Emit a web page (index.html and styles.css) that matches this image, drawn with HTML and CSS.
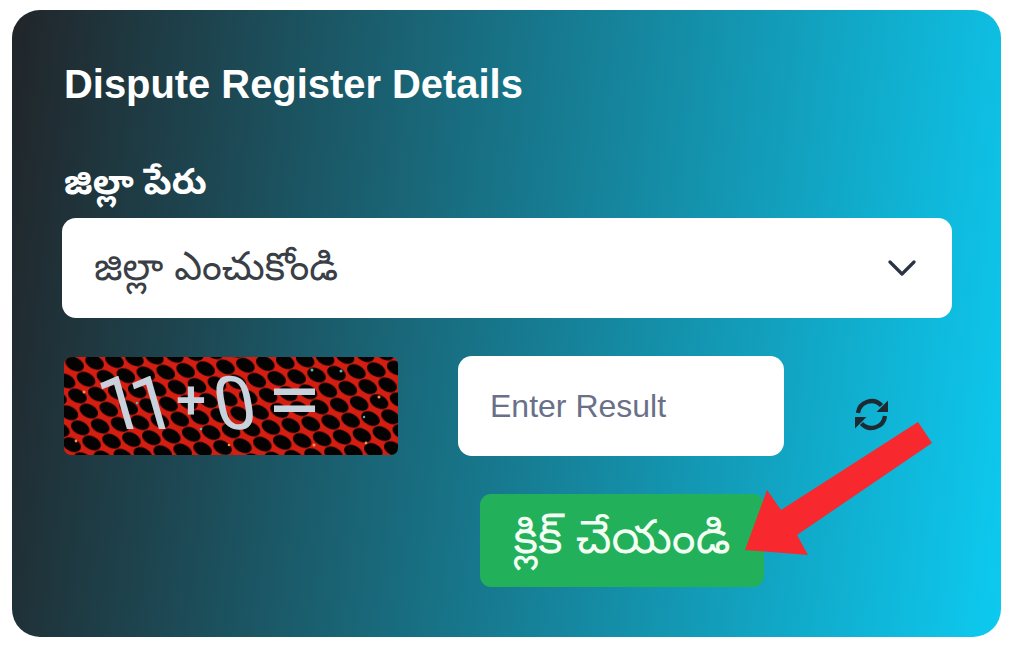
FILE: index.html
```html
<!DOCTYPE html>
<html lang="te">
<head>
<meta charset="utf-8">
<title>Dispute Register Details</title>
<link rel="stylesheet" href="styles.css">
</head>
<body>
<main class="card">
  <h1 class="title">Dispute Register Details</h1>
  <label class="label">జిల్లా పేరు</label>
  <div class="select">
    <span>జిల్లా ఎంచుకోండి</span>
    <svg class="chevron" viewBox="0 0 28 16" aria-hidden="true"><path d="M2 2 L14 14 L26 2" fill="none" stroke="#2b3445" stroke-width="3.2" stroke-linecap="round" stroke-linejoin="round"/></svg>
  </div>
  <div class="captcha-row">
    <div class="captcha">
      <svg class="mesh" width="334" height="98" aria-hidden="true">
        <defs>
          <pattern id="net" width="20" height="32" patternUnits="userSpaceOnUse" patternTransform="rotate(-5)">
            <rect width="20" height="32" fill="#d41e12"/>
            <g fill="#050202">
              <ellipse cx="10" cy="8" rx="9.8" ry="6.6" transform="rotate(32 10 8)"/>
              <ellipse cx="0" cy="24" rx="9.8" ry="6.6" transform="rotate(32 0 24)"/>
              <ellipse cx="20" cy="24" rx="9.8" ry="6.6" transform="rotate(32 20 24)"/>
              <ellipse cx="0" cy="-8" rx="9.8" ry="6.6" transform="rotate(32 0 -8)"/>
              <ellipse cx="20" cy="-8" rx="9.8" ry="6.6" transform="rotate(32 20 -8)"/>
              <ellipse cx="10" cy="40" rx="9.8" ry="6.6" transform="rotate(32 10 40)"/>
            </g>
          </pattern>
        </defs>
        <rect width="334" height="98" fill="url(#net)"/>
        <g fill="#5fb7a8">
          <circle cx="248" cy="13" r="1.5"/><circle cx="277" cy="14" r="1.5"/><circle cx="137" cy="72" r="1.3"/><circle cx="300" cy="60" r="1.2"/><circle cx="73" cy="46" r="1.2"/>
        </g>
        <g fill="#f0964e">
          <circle cx="20" cy="35" r="1.5"/><circle cx="12" cy="84" r="1.4"/><circle cx="315" cy="40" r="1.5"/><circle cx="250" cy="88" r="1.5"/><circle cx="302" cy="86" r="1.4"/><circle cx="165" cy="88" r="1.3"/>
        </g>
      </svg>
      <span class="captcha-text"><span class="ch one">1</span><span class="ch one-b">1</span><span class="ch plus">+</span><span class="ch zero">0</span><span class="ch equals">=</span></span>
    </div>
    <div class="result">Enter Result</div>
    <svg class="refresh" viewBox="0 0 33 33" aria-hidden="true">
      <g fill="#1d2a33"><polygon points="33,2.5 33,14 21.5,14"/><polygon points="0,30.5 0,19 11.5,19"/></g>
      <g fill="none" stroke="#1d2a33" stroke-width="4.4"><path d="M3 15 A13.6 13.6 0 0 1 26.5 7.5"/><path d="M30 18 A13.6 13.6 0 0 1 6.5 25.5"/></g>
    </svg>
  </div>
  <button class="submit" type="button">క్లిక్ చేయండి</button>
  <svg class="arrow" viewBox="0 0 200 150" aria-hidden="true"><polygon fill="#f7282e" points="173,3 187,24 52,116 63,136 0,131 22,71 36,91"/></svg>
</main>
</body>
</html>
```
FILE: styles.css
```css
* { box-sizing: border-box; }
html, body { margin: 0; height: 100%; background: #fff; }
body { padding: 10px 11px 9px 12px; font-family: "Liberation Sans", "Noto Sans Telugu", "Noto Sans", sans-serif; overflow: hidden; }
.card {
  position: relative;
  height: 627px;
  padding: 49px 49px 0 50px;
  border-radius: 28px;
  background: linear-gradient(97deg, #212529 0%, #0dcaf0 100%);
  color: #fff;
}
.title { margin: 0 0 0 2px; font-size: 39.9px; line-height: 50px; font-weight: 700; }
.label { display: block; margin: 51px 0 0 2px; font-size: 36px; line-height: 44px; font-weight: 700; }
.select {
  display: flex; align-items: center; justify-content: space-between;
  height: 100px; margin-top: 14px; padding: 0 36px 0 32px;
  border-radius: 14px; background: #fff; color: #3a3f47; font-size: 39px;
}
.select span { padding-top: 7px; }
.chevron { width: 28px; height: 16px; }
.captcha-row { display: flex; align-items: flex-start; margin-top: 38px; }
.captcha { position: relative; flex: none; width: 334px; height: 98px; margin: 1px 0 0 2px; }
.mesh { display: block; border-radius: 7px; }
.captcha-text { position: absolute; inset: 0; display: block; font-family: Roboto, sans-serif; color: #c8d2dc; }
.ch { position: absolute; line-height: 1; }
.one { left: 36px; top: 10px; font-size: 74px; transform: skewX(16deg); }
.one-b { left: 68px; top: 10px; font-size: 74px; transform: skewX(16deg); }
.plus { left: 112px; top: 16px; font-size: 54px; font-weight: 500; }
.zero { left: 150px; top: 10px; font-size: 74px; transform: skewX(10deg); }
.equals { left: 207px; top: 1px; font-size: 84px; transform: scaleX(1.2); }
.result {
  flex: none; width: 326px; height: 100px; margin-left: 60px; padding: 0 0 0 32px;
  display: flex; align-items: center;
  border-radius: 14px; background: #fff; color: #6a7088; font-size: 32px;
}
.refresh { flex: none; width: 33px; height: 33px; margin: 42px 0 0 71px; }
.submit {
  display: flex; align-items: center; justify-content: center;
  width: 284px; height: 93px; margin: 38px 0 0 418px; padding: 4px 0 0;
  border: 0; border-radius: 11px; background: #22b05a; color: #f4fff4;
  font-family: inherit; font-size: 47px;
}
.arrow { position: absolute; left: 733px; top: 409px; width: 200px; height: 150px; overflow: visible; }
```
